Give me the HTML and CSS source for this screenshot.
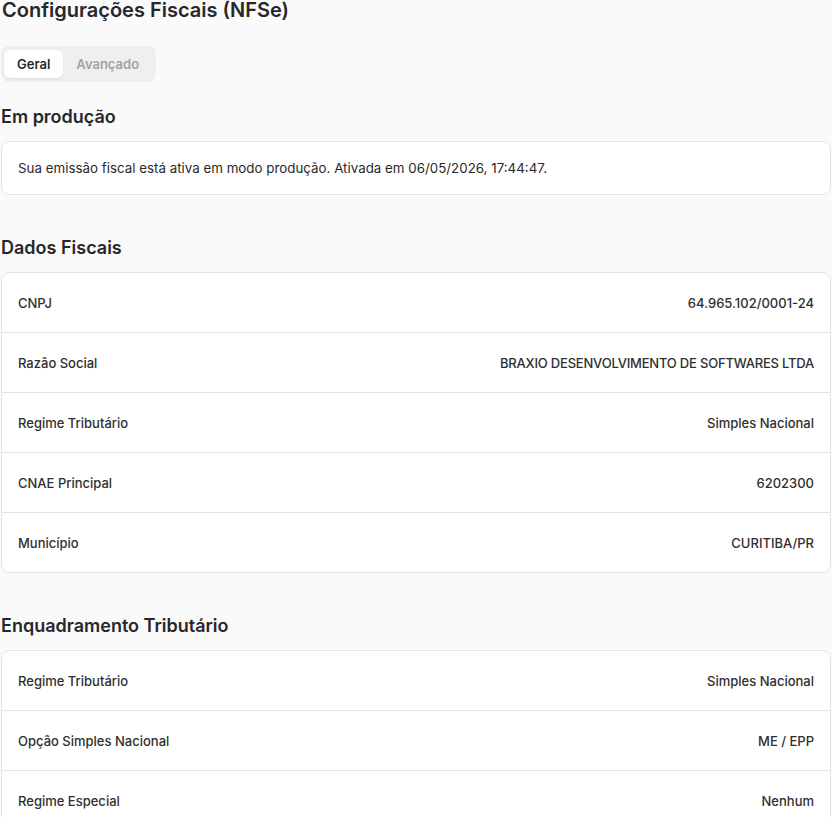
FILE: index.html
```html
<!DOCTYPE html>
<html lang="pt-BR">
<head>
<meta charset="utf-8">
<title>Configurações Fiscais (NFSe)</title>
<link rel="stylesheet" href="styles.css">
</head>
<body>
<main class="page">
  <h1 class="title">Configurações Fiscais (NFSe)</h1>

  <div class="tabs">
    <button class="tab tab-active">Geral</button>
    <button class="tab">Avançado</button>
  </div>

  <section class="section">
    <h2 class="section-title">Em produção</h2>
    <div class="card card-note">
      <p class="note">Sua emissão fiscal está ativa em modo produção. Ativada em 06/05/2026, 17:44:47.</p>
    </div>
  </section>

  <section class="section">
    <h2 class="section-title">Dados Fiscais</h2>
    <div class="card">
      <div class="row"><span class="label">CNPJ</span><span class="value">64.965.102/0001-24</span></div>
      <div class="row"><span class="label">Razão Social</span><span class="value value-caps">BRAXIO DESENVOLVIMENTO DE SOFTWARES LTDA</span></div>
      <div class="row"><span class="label">Regime Tributário</span><span class="value">Simples Nacional</span></div>
      <div class="row"><span class="label">CNAE Principal</span><span class="value">6202300</span></div>
      <div class="row"><span class="label">Município</span><span class="value">CURITIBA/PR</span></div>
    </div>
  </section>

  <section class="section">
    <h2 class="section-title">Enquadramento Tributário</h2>
    <div class="card">
      <div class="row"><span class="label">Regime Tributário</span><span class="value">Simples Nacional</span></div>
      <div class="row"><span class="label">Opção Simples Nacional</span><span class="value">ME / EPP</span></div>
      <div class="row"><span class="label">Regime Especial</span><span class="value">Nenhum</span></div>
      <div class="row"><span class="label">Incentivo Fiscal</span><span class="value">Não</span></div>
    </div>
  </section>
</main>
</body>
</html>
```

FILE: styles.css
```css
html, body {
  margin: 0;
  padding: 0;
  background: #fafafa;
}

body {
  font-family: Inter, "Noto Sans", "Liberation Sans", sans-serif;
  color: #2a2a2a;
  -webkit-font-smoothing: antialiased;
}

.page {
  padding: 0 1px 0 1px;
  width: 830px;
}

.title {
  margin: 0 0 0 1px;
  font-size: 20px;
  line-height: 20px;
  font-weight: 600;
  color: #27272a;
}

.tabs {
  display: inline-flex;
  margin-top: 26px;
  padding: 4px 4px 4px 3px;
  background: #efefef;
  border-radius: 8px;
}

.tab {
  height: 28px;
  padding: 0 13px;
  border: none;
  background: transparent;
  font-family: inherit;
  font-size: 13px;
  font-weight: 600;
  color: #a3a3a3;
  border-radius: 6px;
  cursor: pointer;
}

.tab-active {
  background: #ffffff;
  color: #27272a;
  box-shadow: 0 1px 2px rgba(0, 0, 0, 0.08);
}

.section {
  margin-top: 21px;
}

.section + .section {
  margin-top: 39px;
}

.section-title {
  margin: 0 0 10px 0;
  font-size: 18px;
  line-height: 28px;
  font-weight: 600;
  color: #27272a;
}

.card {
  background: #ffffff;
  border: 1px solid #e4e4e4;
  border-radius: 8px;
}

.card-note {
  padding: 16px;
}

.note {
  margin: 0;
  font-size: 13.35px;
  line-height: 20px;
  color: #2a2a2a;
}

.row {
  display: flex;
  justify-content: space-between;
  align-items: center;
  height: 59px;
  padding: 0 16px;
  border-bottom: 1px solid #e4e4e4;
}

.row:last-child {
  border-bottom: none;
}

.label,
.value {
  font-size: 13px;
  font-weight: 500;
  color: #2f2f2f;
}

.value-caps {
  letter-spacing: -0.2px;
}
```
